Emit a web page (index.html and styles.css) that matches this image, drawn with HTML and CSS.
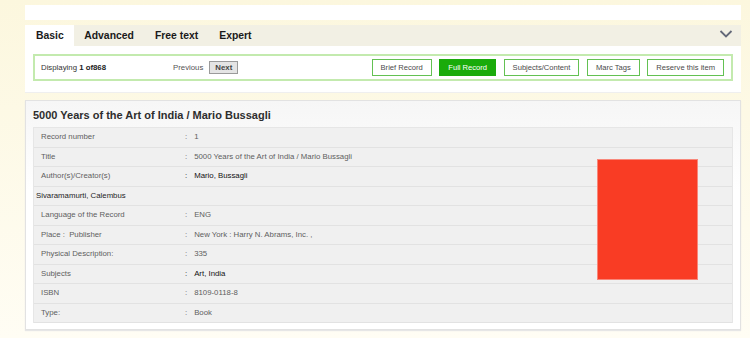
FILE: index.html
```html
<!DOCTYPE html>
<html lang="en">
<head>
    <meta charset="UTF-8">
    <meta name="viewport" content="width=device-width, initial-scale=1.0">
    <title>Full Record</title>
    <link rel="stylesheet" href="styles.css">
</head>
<body>
    <div class="page">
        <div class="top-bar"></div>

        <div class="tabs">
            <div class="tab active">Basic</div>
            <div class="tab">Advanced</div>
            <div class="tab">Free text</div>
            <div class="tab">Expert</div>
            <svg class="chevron" width="14" height="8" viewBox="0 0 14 8">
                <polyline points="1.5,1 7,6.5 12.5,1" fill="none" stroke="#636878" stroke-width="1.8"/>
            </svg>
        </div>

        <div class="search-panel">
            <div class="nav-bar">
                <div class="displaying">Displaying <b>1 of868</b></div>
                <div class="pager">
                    <span class="prev">Previous</span>
                    <button class="next-btn">Next</button>
                </div>
                <div class="views">
                    <button class="view-btn">Brief Record</button>
                    <button class="view-btn active">Full Record</button>
                    <button class="view-btn">Subjects/Content</button>
                    <button class="view-btn">Marc Tags</button>
                    <button class="view-btn">Reserve this item</button>
                </div>
            </div>
        </div>

        <div class="record">
            <div class="record-title">5000 Years of the Art of India / Mario Bussagli</div>
            <div class="record-table">
                <div class="row">
                    <div class="label">Record number</div>
                    <div class="value"><span class="colon">:</span>1</div>
                </div>
                <div class="row">
                    <div class="label">Title</div>
                    <div class="value"><span class="colon">:</span>5000 Years of the Art of India / Mario Bussagli</div>
                </div>
                <div class="row">
                    <div class="label">Author(s)/Creator(s)</div>
                    <div class="value dark"><span class="colon">:</span>Mario, Bussagli</div>
                </div>
                <div class="row">
                    <div class="full">Sivaramamurti, Calembus</div>
                </div>
                <div class="row">
                    <div class="label">Language of the Record</div>
                    <div class="value"><span class="colon">:</span>ENG</div>
                </div>
                <div class="row">
                    <div class="label">Place :&nbsp; Publisher</div>
                    <div class="value"><span class="colon">:</span>New York : Harry N. Abrams, Inc. ,</div>
                </div>
                <div class="row">
                    <div class="label">Physical Description:</div>
                    <div class="value"><span class="colon">:</span>335</div>
                </div>
                <div class="row">
                    <div class="label">Subjects</div>
                    <div class="value dark"><span class="colon">:</span>Art, India</div>
                </div>
                <div class="row">
                    <div class="label">ISBN</div>
                    <div class="value"><span class="colon">:</span>8109-0118-8</div>
                </div>
                <div class="row">
                    <div class="label">Type:</div>
                    <div class="value"><span class="colon">:</span>Book</div>
                </div>

                <div class="cover"></div>
            </div>
        </div>
    </div>
</body>
</html>
```

FILE: styles.css
```css
body {
    margin: 0;
    padding: 0;
    font-family: "Liberation Sans", Arial, sans-serif;
    font-size: 7.8px;
    color: #4a4a4a;
    background: linear-gradient(#fcf7de, #fffdf4 338px);
    min-height: 338px;
}

.page {
    width: 716px;
    margin-left: 25px;
    padding-top: 5px;
}

.top-bar {
    height: 15px;
    background-color: #fff;
    margin-bottom: 5px;
}

.tabs {
    display: flex;
    align-items: center;
    height: 21px;
    background-color: #f2f0e4;
}

.tab {
    padding: 0 10.5px;
    line-height: 21px;
    font-size: 10.4px;
    font-weight: bold;
    color: #1a1a1a;
}

.tab.active {
    padding: 0 10px 0 11px;
    background-color: #fff;
}

.chevron {
    margin-left: auto;
    margin-right: 8px;
    margin-top: -3px;
}

.search-panel {
    background-color: #fff;
    padding: 8px 8px 11px;
    border-bottom: 1px solid #efefef;
    margin-bottom: 7px;
}

.nav-bar {
    display: flex;
    align-items: center;
    height: 23px;
    border: 2px solid #c3eaae;
    padding: 0 7px 0 6px;
}

.displaying {
    width: 132px;
    color: #333;
}

.displaying b {
    color: #222;
}

.pager {
    display: flex;
    align-items: center;
    gap: 6px;
}

.prev {
    color: #555;
}

.next-btn {
    font-family: inherit;
    font-size: 7.8px;
    font-weight: bold;
    color: #444;
    background-color: #e4e4e4;
    border: 1px solid #9a9a9a;
    height: 13px;
    padding: 0 5px;
    line-height: 11px;
}

.views {
    display: flex;
    gap: 7.5px;
    margin-left: auto;
}

.view-btn {
    font-family: inherit;
    font-size: 7.6px;
    color: #4a4a4a;
    background-color: #fff;
    border: 1.5px solid #63c152;
    height: 17px;
    padding: 0 8px;
}

.view-btn.active {
    background-color: #1aab0b;
    border-color: #1aab0b;
    color: #fff;
}

.record {
    border: 1px solid #e2e2e2;
    box-shadow: 0 1px 1px #e6e6e6;
    background: linear-gradient(#f6f6f6, #fff 90px);
    padding: 0 7px 6px;
}

.record-title {
    height: 26px;
    line-height: 28px;
    font-size: 11px;
    font-weight: bold;
    color: #2e2e2e;
}

.record-table {
    position: relative;
    border: 1px solid #e6e6e6;
    border-bottom: none;
}

.row {
    display: grid;
    grid-template-columns: 151px 1fr;
    height: 18.5px;
    line-height: 18.5px;
    background-color: #f0f0f0;
    border-bottom: 1px solid #e2e2e2;
}

.label {
    padding-left: 7px;
    color: #5e5e5e;
}

.value {
    color: #5e5e5e;
}

.value.dark {
    color: #111;
}

.colon {
    margin-right: 7px;
}

.full {
    grid-column: 1 / 3;
    padding-left: 2px;
    color: #1e1e1e;
}

.cover {
    position: absolute;
    left: 563px;
    top: 31px;
    width: 101px;
    height: 121px;
    box-sizing: border-box;
    background-color: #f93c24;
    border: 1px solid #f8877a;
}
```
